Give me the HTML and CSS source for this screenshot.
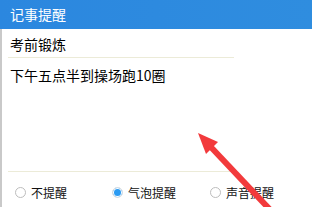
FILE: index.html
```html
<!DOCTYPE html>
<html lang="zh">
    <head>
        <title>记事提醒</title>
        <meta charset="utf-8" />
        <link rel="stylesheet" href="styles.css">
    </head>

    <body>
        <div class="titleBar">记事提醒</div>
        <div class="panel">
            <div class="field titleField">考前锻炼</div>
            <div class="field bodyField">下午五点半到操场跑10圈</div>
            <div class="radioRow">
                <label class="radioItem"><span class="dot"></span>不提醒</label>
                <label class="radioItem"><span class="dot checked"></span>气泡提醒</label>
                <label class="radioItem"><span class="dot"></span>声音提醒</label>
            </div>
        </div>

        <!-- red arrow drawn over the screenshot -->
        <svg class="arrow" width="312" height="207" viewBox="0 0 312 207">
            <line x1="208" y1="144" x2="276" y2="216" stroke="#f23a3c" stroke-width="6" />
            <polygon points="198,133 218,142 206,154" fill="#f23a3c" />
        </svg>
    </body>
</html>
```

FILE: styles.css
```css
body {
    margin: 0;
    padding: 0;
    width: 312px;
    height: 207px;
    overflow: hidden;
    position: relative;
    background-color: #ffffff;
    font-family: "Noto Sans CJK SC", "Noto Sans", sans-serif;
    color: #000000;
}

.titleBar {
    height: 29px;
    line-height: 28px;
    padding-left: 10px;
    font-size: 14px;
    color: #ffffff;
    background: linear-gradient(90deg, #2b87df, #2f8ddf);
}

.panel {
    height: 178px;
    border-left: 2px solid #c9c9c9;
    display: flex;
    flex-direction: column;
}

.field {
    margin-left: 6px;
    width: 224px;
    padding-left: 2px;
    border-bottom: 1px solid #ecebd8;
}

.titleField {
    height: 28px;
    line-height: 30px;
    font-size: 14px;
}

.bodyField {
    height: 106px;
    padding-top: 7px;
    line-height: 20px;
    font-size: 14px;
}

.radioRow {
    flex: 1;
    display: grid;
    grid-template-columns: 97px 98px auto;
    align-items: center;
    padding-left: 13px;
    padding-top: 5px;
    font-size: 12px;
    color: #111111;
}

.radioItem {
    display: flex;
    align-items: center;
    gap: 5px;
}

.dot {
    width: 9px;
    height: 9px;
    border: 1px solid #bdbdbd;
    border-radius: 50%;
    background-color: #ffffff;
}

.dot.checked {
    border-color: #e2e2e2;
    background-color: #2a9bf3;
    box-shadow: inset 0 0 0 1px #ffffff;
}

.arrow {
    position: absolute;
    left: 0;
    top: 0;
}
```
